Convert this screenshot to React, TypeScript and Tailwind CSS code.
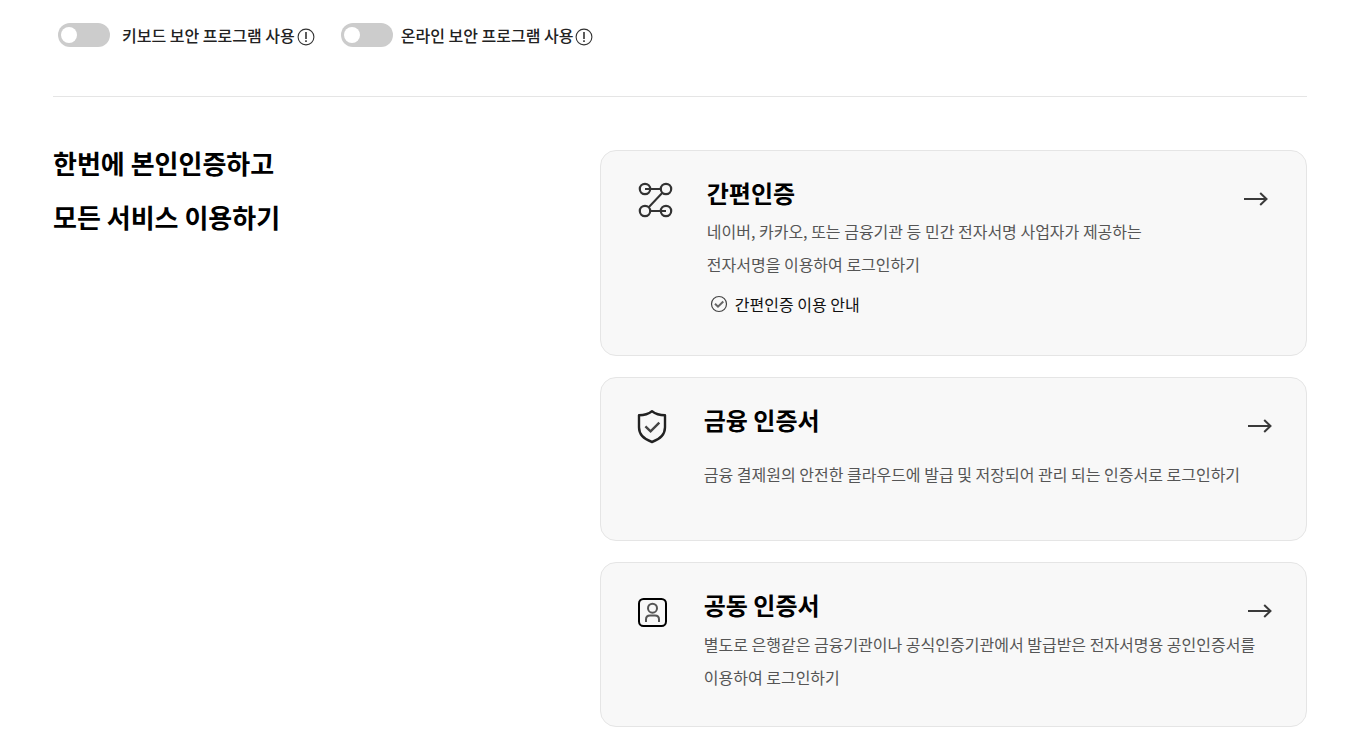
import React, { useState } from "react";

interface SecurityToggleProps {
  id: string;
  label: string;
  gap: string;
}

interface AuthCardProps {
  title: string;
  icon: React.ReactNode;
  lines: string[];
  cardClass: string;
  descClass: string;
  children?: React.ReactNode;
}

function InfoIcon() {
  return (
    <svg className="w-[18px] h-[18px]" viewBox="0 0 18 18" fill="none" stroke="#333" aria-hidden="true">
      <circle cx="9" cy="9" r="7.9" strokeWidth="1.1" />
      <path d="M9 4v7" strokeWidth="1.6" />
      <path d="M9 12.3v1.6" strokeWidth="1.6" />
    </svg>
  );
}

function NodesIcon() {
  return (
    <svg className="w-9 h-9 shrink-0" viewBox="0 0 36 36" fill="none" stroke="#333" strokeWidth="2.2" aria-hidden="true">
      <circle cx="7" cy="7" r="5.2" />
      <circle cx="28" cy="7" r="5.2" />
      <circle cx="7" cy="29" r="5.2" />
      <circle cx="28" cy="29" r="5.2" />
      <path d="M7 7h15.8M24.4 10.7 10.7 25.3M12.2 29H28" strokeWidth="2" />
    </svg>
  );
}

function ShieldIcon() {
  return (
    <svg className="w-[30px] h-9 shrink-0" viewBox="0 0 30 36" fill="none" stroke="#222" aria-hidden="true">
      <path
        d="M15 2.2c3.6 2.8 8 4 13 4.1v12c0 7.2-5.2 12.1-13 14.7C7.2 30.4 2 25.5 2 18.3v-12C7 6.2 11.4 5 15 2.2z"
        strokeWidth="2.4"
        strokeLinejoin="round"
      />
      <path d="m8.4 17.3 5.2 5 8.7-8.6" stroke="#444" strokeWidth="2.4" />
    </svg>
  );
}

function PersonIcon() {
  return (
    <svg className="w-[30px] h-9 shrink-0" viewBox="0 0 30 36" fill="none" aria-hidden="true">
      <rect x="2" y="5" width="27" height="27" rx="4.5" stroke="#000" strokeWidth="2" />
      <circle cx="15.5" cy="14.2" r="4.5" stroke="#555" strokeWidth="2" />
      <path d="M9 28v-2.7c0-2.6 1.5-3.9 4-3.9h5c2.5 0 4 1.300 4 3.900V28" stroke="#555" strokeWidth="2" />
    </svg>
  );
}

function ArrowIcon() {
  return (
    <svg className="w-6 h-4" viewBox="0 0 24 16" fill="none" stroke="#3a3a3a" strokeWidth="2" aria-hidden="true">
      <path d="M0 8h22.5" />
      <path d="m16.200 2 6.300 6-6.300 6" />
    </svg>
  );
}

function CheckCircleIcon() {
  return (
    <svg className="w-[18px] h-[18px]" viewBox="0 0 18 18" fill="none" stroke="#444" aria-hidden="true">
      <circle cx="9" cy="9" r="7.5" strokeWidth="1.2" />
      <path d="m5 8.700 3 3 5.300-5.200" stroke="#666" strokeWidth="2" />
    </svg>
  );
}

function SecurityToggle({ id, label, gap }: SecurityToggleProps) {
  const [checked, setChecked] = useState(false);

  return (
    <div className="flex items-center">
      <input
        id={id}
        type="checkbox"
        role="switch"
        checked={checked}
        onChange={(e) => setChecked(e.target.checked)}
        className="appearance-none w-[52px] h-6 py-1 px-[3px] shrink-0 rounded-full bg-[#ccc] cursor-pointer transition-colors checked:bg-[#333] before:block before:w-4 before:h-4 before:rounded-full before:bg-white before:transition-transform checked:before:translate-x-7"
      />
      <label htmlFor={id} className={`${gap} text-base leading-6 font-medium text-[#222] cursor-pointer`}>
        {label}
      </label>
      <button type="button" aria-label={`${label} 안내`} className="ml-0.5 mt-[3px] cursor-pointer">
        <InfoIcon />
      </button>
    </div>
  );
}

function AuthCard({ title, icon, lines, cardClass, descClass, children }: AuthCardProps) {
  return (
    <article className={`flex items-start rounded-2xl border border-[#e5e5e5] bg-[#f8f8f8] pt-6 ${cardClass}`}>
      <div className="mt-[7px] shrink-0">{icon}</div>
      <div className="flex-1 min-w-0">
        <div className="flex items-start justify-between h-9">
          <h3 className="text-2xl leading-9 font-bold text-black">{title}</h3>
          <a href="#" aria-label={title} className="mt-4 shrink-0">
            <ArrowIcon />
          </a>
        </div>
        <p className={`text-base leading-[33px] text-[#555] ${descClass}`}>
          {lines.map((line) => (
            <span key={line} className="block">
              {line}
            </span>
          ))}
        </p>
        {children}
      </div>
    </article>
  );
}

export default function App() {
  return (
    <main className="bg-white pl-[53px] pr-16 pb-[18px] font-['Noto_Sans_CJK_KR',sans-serif]">
      {/* Security programs */}
      <div className="flex flex-wrap items-center gap-[26px] border-b border-[#e5e5e5] pt-[23px] pb-[49px] pl-[5px]">
        <SecurityToggle id="keyboard-security" label="키보드 보안 프로그램 사용" gap="ml-3" />
        <SecurityToggle id="online-security" label="온라인 보안 프로그램 사용" gap="ml-2" />
      </div>

      {/* Authentication methods */}
      <section className="flex items-start pt-[39px]">
        <h2 className="flex-1 text-[26px] leading-[54px] font-bold text-black">
          한번에 본인인증하고
          <br />
          모든 서비스 이용하기
        </h2>

        <div className="w-[56.4%] pt-3.5 flex flex-col gap-[21px]">
          <AuthCard
            title="간편인증"
            icon={<NodesIcon />}
            lines={[
              "네이버, 카카오, 또는 금융기관 등 민간 전자서명 사업자가 제공하는",
              "전자서명을 이용하여 로그인하기",
            ]}
            cardClass="gap-[33px] pl-[37px] pr-[38px] pb-[39px]"
            descClass="mt-1"
          >
            <a href="#" className="mt-[11px] ml-[3px] flex items-center gap-[7px] text-base leading-6 text-[#111]">
              <CheckCircleIcon />
              간편인증 이용 안내
            </a>
          </AuthCard>

          <AuthCard
            title="금융 인증서"
            icon={<ShieldIcon />}
            lines={["금융 결제원의 안전한 클라우드에 발급 및 저장되어 관리 되는 인증서로 로그인하기"]}
            cardClass="gap-[37px] pl-9 pr-[34px] pb-[49px]"
            descClass="mt-5"
          />

          <AuthCard
            title="공동 인증서"
            icon={<PersonIcon />}
            lines={[
              "별도로 은행같은 금융기관이나 공식인증기관에서 발급받은 전자서명용 공인인증서를",
              "이용하여 로그인하기",
            ]}
            cardClass="gap-[37px] pl-9 pr-[34px] pb-8"
            descClass="mt-[5px]"
          />
        </div>
      </section>
    </main>
  );
}
